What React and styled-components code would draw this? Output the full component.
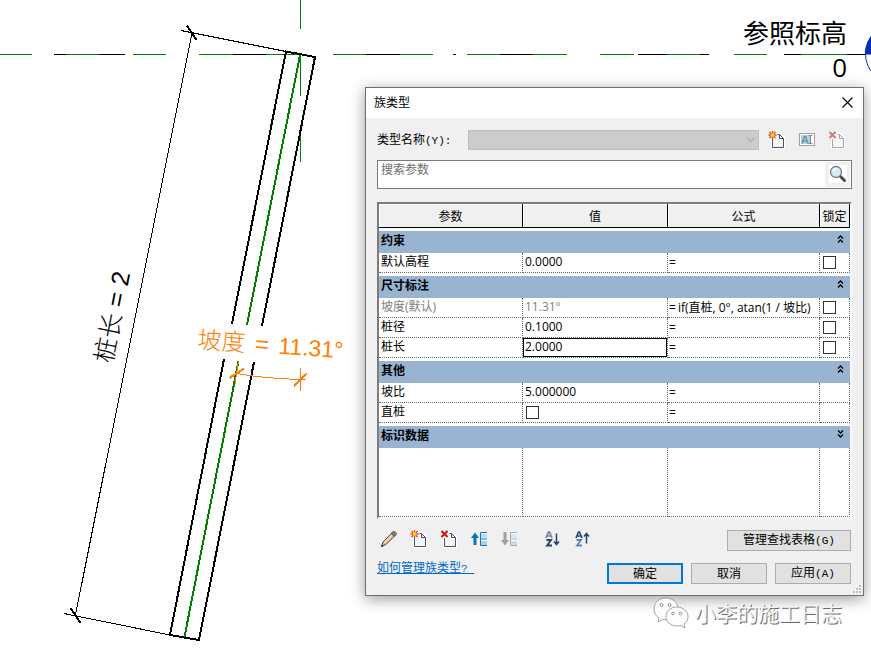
import React from 'react';
import styled, { createGlobalStyle } from 'styled-components';

const GlobalStyle = createGlobalStyle`
  * {
    box-sizing: border-box;
  }

  body {
    margin: 0;
    background-color: #ffffff;
    color: #000000;
    font-family: 'Open Sans', 'Noto Sans CJK SC', sans-serif;
    font-size: 12px;
  }

  button, input, select {
    font: inherit;
    color: inherit;
  }
`

const Workspace = styled.main`
  position: relative;
  min-height: 100vh;
  overflow: hidden;
`

const Drawing = styled.svg`
  position: absolute;
  top: 0;
  left: 0;
  width: 100%;
  height: 100%;
`

const LevelLabel = styled.div`
  position: absolute;
  top: 16px;
  right: 24px;
  font-size: 26px;
  line-height: 34px;
  text-align: right;
`

const Dialog = styled.section`
  position: absolute;
  top: 87px;
  left: 365px;
  right: 7px;
  border: 1px solid #6e6e6e;
  background-color: #f0f0f0;
  box-shadow: 0 3px 14px rgba(0, 0, 0, 0.4);
`

const TitleBar = styled.header`
  display: flex;
  align-items: center;
  justify-content: space-between;
  height: 30px;
  padding: 0 8px 2px;
  background-color: #ffffff;
`

const Title = styled.h1`
  margin: 0;
  font-size: 12px;
  font-weight: normal;
`

const IconButton = styled.button`
  display: flex;
  align-items: center;
  justify-content: center;
  flex: none;
  width: ${props => props.$width || 24}px;
  height: ${props => props.$height || 20}px;
  padding: 0;
  border: 0;
  background: none;
`

const DialogBody = styled.div`
  display: flex;
  flex-direction: column;
  padding: 12px 11px 11px;
`

const TypeRow = styled.div`
  display: flex;
  align-items: center;
  height: 20px;
`

const TypeLabel = styled.label`
  width: 91px;
  line-height: 16px;
  white-space: nowrap;
`

const Mono = styled.span`
  font-family: 'Liberation Mono', monospace;
  font-size: 11px;
  white-space: pre;
`

const SelectBox = styled.div`
  display: grid;
  flex: 1;
  align-items: center;
  margin-right: 3px;

  > * {
    grid-area: 1 / 1;
  }

  > svg {
    justify-self: end;
    margin-right: 3px;
    pointer-events: none;
  }
`

const TypeSelect = styled.select`
  appearance: none;
  width: 100%;
  height: 20px;
  border: 1px solid #bfbfbf;
  border-radius: 0;
  background-color: #cccccc;
  opacity: 1;
`

const SearchBox = styled.div`
  display: flex;
  align-items: flex-start;
  height: 29px;
  margin-top: 10px;
  padding: 1px;
  border: 1px solid #7a7a7a;
  background-color: #ffffff;
`

const SearchInput = styled.input`
  flex: 1;
  min-width: 0;
  height: 14px;
  padding: 0 2px;
  border: 0;
  outline: 0;

  &::placeholder {
    color: #6d6d6d;
  }
`

const SearchButton = styled(IconButton)`
  padding-bottom: 2px;
  background-color: #f0f0f0;
`

const GridFrame = styled.div`
  margin-top: 13px;
  border-style: solid;
  border-width: 2px;
  border-color: #7c7c7c #fafafa #fafafa #7c7c7c;
  background-color: #ffffff;
`

const Grid = styled.table`
  width: 100%;
  table-layout: fixed;
  border-collapse: separate;
  border-spacing: 0;
`

const HeadCell = styled.th`
  height: 24px;
  padding: 0;
  border-right: 1px solid #000000;
  border-bottom: 1px solid #000000;
  background-color: #f0f0f0;
  box-shadow: inset 1px 1px #ffffff;
  font-weight: normal;
  white-space: nowrap;
`

const GroupCell = styled.th`
  padding: 3px 0 0;
  text-align: left;
`

const GroupBand = styled.div`
  display: flex;
  align-items: flex-start;
  justify-content: space-between;
  height: 22px;
  padding-left: 2px;
  background-color: #99b4d1;
  line-height: 20px;
`

const Cell = styled.td`
  height: ${props => props.$height || 20}px;
  padding: 0 0 0 ${props => props.$pad || 0}px;
  border-right: 1px dotted #696969;
  border-bottom: 1px dotted #696969;
  color: ${props => (props.$muted ? '#808080' : '#000000')};
  line-height: 16px;
  white-space: nowrap;
`

const NameCell = styled(Cell)`
  padding-bottom: 2px;
`

const CellInput = styled.input`
  display: block;
  width: 100%;
  height: 19px;
  padding: 0 1px 2px;
  border: 1px solid ${props => (props.$active ? '#000000' : 'transparent')};
  outline: 0;
  background: none;
`

const Formula = styled.label`
  display: flex;
  align-items: center;
  height: 19px;
`

const FormulaInput = styled.input`
  flex: 1;
  min-width: 0;
  height: 17px;
  padding: 0 0 1px 2px;
  border: 0;
  outline: 0;
  background: none;
`

const CheckBox = styled.input`
  display: block;
  appearance: none;
  width: 13px;
  height: 13px;
  margin: 0;
  border: 1px solid #333333;
  background-color: #ffffff;
`

const ToolRow = styled.div`
  display: flex;
  align-items: flex-start;
  justify-content: space-between;
  height: 21px;
  margin-top: ${props => props.$gap}px;
  padding-right: 1px;
`

const ToolGroup = styled.div`
  display: flex;
  gap: ${props => props.$gap}px;
`

const PushButton = styled.button`
  width: ${props => props.$width || 76}px;
  height: 21px;
  padding: 0;
  border: ${props => (props.$primary ? '2px solid #0078d7' : '1px solid #adadad')};
  background-color: #e1e1e1;
  line-height: 17px;
`

const HelpLink = styled.a`
  color: #0066cc;
  line-height: 10px;
  text-decoration: underline;
`

const Grip = styled.svg`
  position: absolute;
  right: 1px;
  bottom: 1px;
`

const Watermark = styled.div`
  position: absolute;
  top: 595px;
  right: 29px;
  display: flex;
  align-items: center;
  gap: 6px;
  color: #f4f4f4;
  font-size: 21px;
  line-height: 36px;
  text-shadow: 1px 1px 0 #6a6a6a;
`

const PageShape = ({ stroke }) => (
  <>
    <path d="M4.500 6.500V16.500H15.500V7.500L12 3.500H9" fill="none" stroke="#fff" strokeWidth="3" />
    <path d="M4.500 7V16.500H15.500V7.500L11.500 3.500H9V7Z" fill="#f6f7fa" />
    <path d="M4.500 8V16.500H15.500V7.500L11.500 3.500H9.500M11.500 3.500V7.500H15.500" fill="none" stroke={stroke} />
  </>
)

const NewIcon = () => (
  <svg width="18" height="18">
    <PageShape stroke="#4a5160" />
    <path d="M4.500 0V8M.500 4H8.500M1.500 1L7.500 7M7.500 1L1.500 7" stroke="#d8441c" strokeWidth="1.300" />
    <circle cx="4.500" cy="4" r="2" fill="#ffd83a" stroke="#e8901c" strokeWidth=".8" />
  </svg>
)

const DeleteIcon = ({ muted }) => (
  <svg width="18" height="18">
    <PageShape stroke={muted ? '#a5a5a5' : '#4a5160'} />
    <path d="M1.500 1L7.500 7M7.500 1L1.500 7" stroke={muted ? '#d27a78' : '#c81414'} strokeWidth="2" />
  </svg>
)

const RenameIcon = () => (
  <svg width="18" height="16">
    <rect x="1.500" y="1.500" width="15" height="12" fill="#fff" stroke="#a0a0a0" />
    <rect x="3" y="3" width="9" height="9" fill="#a9d3e8" />
    <path d="M4 11.500L6.500 4.500H7.500L10 11.500M5 9H9" fill="none" stroke="#7c8b98" strokeWidth="1.400" />
    <path d="M10.500 3.500H14.500M12.500 3.500V11.500M10.500 11.500H14.500" stroke="#8b8b8b" />
  </svg>
)

const PencilIcon = () => (
  <svg width="18" height="18">
    <path d="M1.500 16.500L3 12L12.500 2.500L15.500 5L6 14.500Z" fill="#e4bd83" stroke="#4b4b4b" />
    <path d="M4.500 12.500L12.500 4.500" stroke="#f9e4b8" strokeWidth="1.500" />
    <path d="M11 3.500L13 1.500Q15.500 1 16.500 3.500L14.500 6.500Z" fill="#777c82" stroke="#555" />
    <path d="M13.500 1.500L16.500 4.500" stroke="#b56a62" strokeWidth="2" />
    <path d="M1 17L2 14.500L3.500 16Z" fill="#222" />
  </svg>
)

const MoveIcon = ({ down }) => (
  <svg width="18" height="18">
    <rect x="11" y="2" width="6" height="14" fill="#fff" />
    <rect x="11" y="4" width="6" height="4" fill={down ? '#dce9f2' : '#bcdcf0'} />
    <rect x="11" y="11" width="6" height="4" fill={down ? '#c5dced' : '#a8d0ea'} />
    <path
      d="M17 2.500H10.500V15.500H17M10.500 9H17"
      fill="none"
      stroke={down ? '#a8a8a8' : '#1478b8'}
    />
    <path
      d={down ? 'M3.500 2H6.500V10H9L5 15.500L1 10H3.500Z' : 'M3.500 15H6.500V8H9L5 2.500L1 8H3.500Z'}
      fill={down ? '#a0a0a0' : '#0873b9'}
    />
  </svg>
)

const SortIcon = ({ up }) => (
  <svg width="18" height="18">
    <path d="M2 8L4.500 2H5.500L8 8M3 6H7" fill="none" stroke={up ? '#2a4a78' : '#6786ad'} strokeWidth="1.700" />
    <path d="M2.500 10H7L3 15.500H8" fill="none" stroke={up ? '#6786ad' : '#263f66'} strokeWidth="1.800" />
    <path
      d={up ? 'M12.500 13.500V4M10 6.500L12.500 3.500L15 6.500' : 'M12.500 3.500V14M10 11.500L12.500 14.500L15 11.500'}
      fill="none"
      stroke="#24436e"
      strokeWidth="1.500"
    />
  </svg>
)

const SearchIcon = () => (
  <svg width="18" height="18">
    <rect width="18" height="18" fill="#fff" />
    <path d="M10.500 10.500L15.500 15.500" stroke="#4a4a4a" strokeWidth="3" strokeLinecap="round" />
    <circle cx="7" cy="7" r="5.500" fill="#d4ecf0" stroke="#6c7d80" strokeWidth="1.300" />
    <path d="M4 6Q5 3.500 8 3.500" fill="none" stroke="#fff" strokeWidth="1.500" />
  </svg>
)

const CloseIcon = () => (
  <svg width="11" height="11">
    <path d="M.500 .500L10.500 10.500M10.500 .500L.500 10.500" stroke="#000" strokeWidth="1.100" />
  </svg>
)

const DoubleChevron = ({ down }) => (
  <svg width="7" height="8">
    <path
      d={down ? 'M1 .500L3.500 3L6 .500M1 4.500L3.500 7L6 4.500' : 'M1 3.500L3.500 1L6 3.500M1 7.500L3.500 5L6 7.500'}
      fill="none"
      stroke="#000"
      strokeWidth="1.300"
    />
  </svg>
)

const ChatIcon = () => (
  <svg width="36" height="34">
    <g fill="#fdfdfd" stroke="#8d8d8d" strokeWidth=".8">
      <path d="M13 2C6 2 1 7 1 13C1 17 3 20 6 22L5 26L10 23.500C20 25 25 19 25 13C25 7 20 2 13 2Z" />
      <path d="M24 11C17 11 13 15.500 13 20.500C13 26 18 30 24 30L28 29.500L32 32L31 28C34 26 35 23.500 35 20.500C35 15.500 30 11 24 11Z" />
    </g>
    <g fill="#fff" stroke="#777" strokeWidth=".8">
      <circle cx="8.500" cy="9" r="1.500" />
      <circle cx="16.500" cy="9" r="1.500" />
      <circle cx="20" cy="17.500" r="1.300" />
      <circle cx="27.500" cy="17.500" r="1.300" />
    </g>
  </svg>
)

const PileDrawing = () => (
  <Drawing>
    <g fill="none" shapeRendering="crispEdges">
      <path
        d="M0 54.500H32M66 54.500H99M133 54.500H166M199 54.500H233M266 54.500H300M333 54.500H366M400 54.500H433M467 54.500H500M533 54.500H567M600 54.500H634M667 54.500H700M734 54.500H767M801 54.500H847M300.500 0V29M300.500 54V96M300.500 129V162"
        stroke="#008000"
      />
      <path
        d="M54 54.500H66M99 54.500H125M233 54.500H266M366 54.500H400M453 54.500H456M500 54.500H533M638 54.500H667M700 54.500H709M784 54.500H801M847 54.500H866M181 30.500L286 51.500M192 33L75.500 615M64 613.500L170 635"
        stroke="#000"
      />
      <path
        d="M187 25.500L196.500 40M70.500 608L80.500 623M232 324L286 51.500L315 57L262 326M224 359L170 635L199 640L254 362"
        stroke="#000"
        strokeWidth="2"
      />
      <path d="M300 55L247 325M238.500 361L184.500 637" stroke="#008000" strokeWidth="2" />
      <path d="M238.500 361L235 384M237 373.500Q266 379 306 379.500M300.500 368V391" stroke="#ff8000" />
      <path d="M229.500 378L244 368.500M294 386L307 373.500" stroke="#ff8000" strokeWidth="2" />
    </g>
    <circle cx="895" cy="54" r="29.500" fill="#fff" stroke="#0033b4" />
    <path d="M865 54.500A30 30 0 0 1 895 24V54.500Z" fill="#0033b4" />
    <g fontFamily="Liberation Sans, Noto Sans CJK SC, sans-serif" fontWeight="300">
      <text transform="translate(112 364) rotate(-78.700)" fontSize="25">
        桩长 = 2
      </text>
      <text transform="translate(197 348) rotate(4)" fontSize="24" fill="#ff8000">
        坡度
        <tspan dx="3"> =</tspan>
        <tspan dx="3" fontSize="23"> 11.31°</tspan>
      </text>
    </g>
  </Drawing>
)

const groups = [
  { name: '约束', rows: [{ name: '默认高程', value: '0.0000', lock: true }] },
  {
    name: '尺寸标注',
    rows: [
      { name: '坡度(默认)', value: '11.31°', formula: 'if(直桩, 0°, atan(1 / 坡比)', lock: true, muted: true },
      { name: '桩径', value: '0.1000', lock: true },
      { name: '桩长', value: '2.0000', lock: true, active: true },
    ],
  },
  { name: '其他', rows: [{ name: '坡比', value: '5.000000' }, { name: '直桩', check: true }] },
  { name: '标识数据', rows: [], closed: true },
]

const ParameterRow = ({ row }) => (
  <tr>
    <NameCell $pad={2} $muted={row.muted}>{row.name}</NameCell>
    <Cell $pad={row.check ? 3 : 0} $muted={row.muted}>
      {row.check
        ? <CheckBox type="checkbox" aria-label={row.name} />
        : <CellInput $active={row.active} defaultValue={row.value} aria-label={row.name} />}
    </Cell>
    <Cell $pad={1}>
      <Formula>
        =
        <FormulaInput defaultValue={row.formula} aria-label={row.name + ' 公式'} />
      </Formula>
    </Cell>
    <Cell $pad={3}>
      {row.lock && <CheckBox type="checkbox" aria-label={'锁定 ' + row.name} />}
    </Cell>
  </tr>
)

const ParameterGrid = () => (
  <GridFrame>
    <Grid>
      <colgroup>
        <col width="144" />
        <col width="145" />
        <col />
        <col width="30" />
      </colgroup>
      <thead>
        <tr>
          <HeadCell>参数</HeadCell>
          <HeadCell>值</HeadCell>
          <HeadCell>公式</HeadCell>
          <HeadCell>锁定</HeadCell>
        </tr>
      </thead>
      {groups.map(group => (
        <tbody key={group.name}>
          <tr>
            <GroupCell colSpan={4}>
              <GroupBand>
                {group.name}
                <IconButton $width={20} $height={16} aria-label={group.name}>
                  <DoubleChevron down={group.closed} />
                </IconButton>
              </GroupBand>
            </GroupCell>
          </tr>
          {group.rows.map(row => <ParameterRow key={row.name} row={row} />)}
        </tbody>
      ))}
      <tbody>
        <tr>
          <Cell $height={69} />
          <Cell />
          <Cell />
          <Cell />
        </tr>
      </tbody>
    </Grid>
  </GridFrame>
)

const App = () => {
  return (
    <Workspace>
      <GlobalStyle />
      <PileDrawing />
      <LevelLabel>参照标高<br />0</LevelLabel>
      <Dialog role="dialog" aria-label="族类型">
        <TitleBar>
          <Title>族类型</Title>
          <IconButton $width={15} aria-label="关闭"><CloseIcon /></IconButton>
        </TitleBar>
        <DialogBody>
          <TypeRow>
            <TypeLabel htmlFor="type-name">类型名称<Mono>(Y):</Mono></TypeLabel>
            <SelectBox>
              <TypeSelect id="type-name" disabled />
              <svg width="10" height="6">
                <path d="M1 .500L5 4.500L9 .500" fill="none" stroke="#9a9a9a" />
              </svg>
            </SelectBox>
            <IconButton $width={30} aria-label="新建类型"><NewIcon /></IconButton>
            <IconButton $width={30} aria-label="重命名类型" disabled><RenameIcon /></IconButton>
            <IconButton $width={30} aria-label="删除类型" disabled><DeleteIcon muted /></IconButton>
          </TypeRow>
          <SearchBox>
            <SearchInput placeholder="搜索参数" aria-label="搜索参数" />
            <SearchButton $width={25} $height={25} aria-label="搜索"><SearchIcon /></SearchButton>
          </SearchBox>
          <ParameterGrid />
          <ToolRow $gap={11}>
            <ToolGroup $gap={20}>
              <ToolGroup $gap={6}>
                <IconButton $height={18} aria-label="编辑参数"><PencilIcon /></IconButton>
                <IconButton $height={18} aria-label="新建参数"><NewIcon /></IconButton>
                <IconButton $height={18} aria-label="删除参数"><DeleteIcon /></IconButton>
                <IconButton $height={18} aria-label="上移"><MoveIcon /></IconButton>
                <IconButton $height={18} aria-label="下移" disabled><MoveIcon down /></IconButton>
              </ToolGroup>
              <ToolGroup $gap={6}>
                <IconButton $height={18} aria-label="升序"><SortIcon /></IconButton>
                <IconButton $height={18} aria-label="降序"><SortIcon up /></IconButton>
              </ToolGroup>
            </ToolGroup>
            <PushButton $width={124}>管理查找表格<Mono>(G)</Mono></PushButton>
          </ToolRow>
          <ToolRow $gap={12}>
            <HelpLink href="#help">如何管理族类型<Mono>? </Mono></HelpLink>
            <ToolGroup $gap={8}>
              <PushButton $primary>确定</PushButton>
              <PushButton>取消</PushButton>
              <PushButton>应用<Mono>(A)</Mono></PushButton>
            </ToolGroup>
          </ToolRow>
        </DialogBody>
        <Grip width="9" height="9" fill="#bfbfbf">
          <path d="M6 0H8V2H6ZM3 3H5V5H3ZM6 3H8V5H6ZM0 6H2V8H0ZM3 6H5V8H3ZM6 6H8V8H6Z" />
        </Grip>
      </Dialog>
      <Watermark>
        <ChatIcon />
        小李的施工日志
      </Watermark>
    </Workspace>
  );
};

export default App;
